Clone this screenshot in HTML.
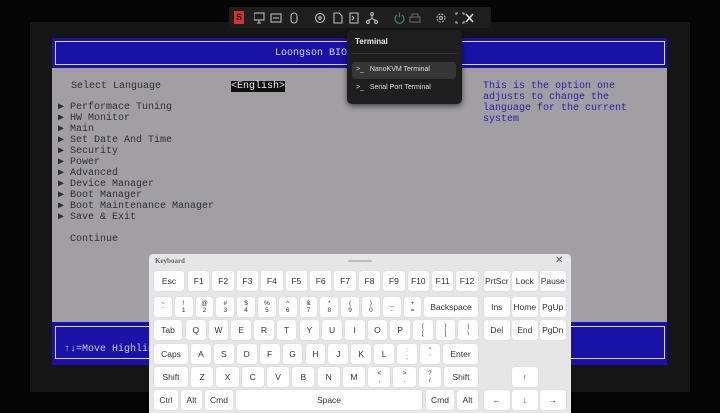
<!DOCTYPE html>
<html><head><meta charset="utf-8"><style>
*{margin:0;padding:0;box-sizing:border-box}
body{width:720px;height:413px;background:#050505;position:relative;overflow:hidden;font-family:"Liberation Sans",sans-serif}
.abs{position:absolute}
.screen{left:30px;top:22px;width:660px;height:370px;background:#151515}
.grey{left:52px;top:38px;width:615px;height:327px;background:#a19fa4}
.blue{background:#1a12a6}
.mono{font-family:"Liberation Mono",monospace;font-size:10px;line-height:11px;white-space:pre;color:#2e2e3a}
.help{color:#2a22a8}
.tb{left:229px;top:7px;width:262px;height:21px;background:#1e1e1e;border-radius:3px}
.ic{position:absolute;top:5px}
.dd{left:347px;top:30px;width:115px;height:74px;background:#1e1e1e;border-radius:5px;box-shadow:0 2px 6px rgba(0,0,0,.6)}
.kb{left:149px;top:254px;width:422px;height:159px;background:#e6e6e6;border-radius:4px 4px 0 0}
.k{position:absolute;background:#fff;border-radius:3px;height:20px;font-size:8.5px;color:#333;display:flex;align-items:center;justify-content:center;text-align:center;line-height:8px;box-shadow:0 0 1px rgba(0,0,0,.15)}
.k.s{font-size:6.5px;line-height:7px;flex-direction:column}
</style></head><body>
<div class="abs screen"></div>
<div class="abs grey"></div>
<div class="abs blue" style="left:52px;top:38px;width:615px;height:30px"></div>
<div class="abs" style="left:55px;top:41px;width:610px;height:24px;border:1px solid #d8d8f0"></div>
<div class="abs mono" style="left:275px;top:48px;color:#d8d8f8">Loongson BIOS Setup Utility</div>
<div class="abs blue" style="left:52px;top:322px;width:615px;height:43px"></div>
<div class="abs" style="left:55px;top:326px;width:610px;height:33px;border:1px solid #d8d8f0"></div>
<div class="abs mono" style="left:64px;top:344px;color:#c8c8f0">↑↓=Move Highlight</div>
<div class="abs mono" style="left:71px;top:81px">Select Language</div>
<div class="abs mono" style="left:231px;top:81px;background:#111;color:#eee">&lt;English&gt;</div>
<div class="abs mono" style="left:58px;top:102px">▶ Performace Tuning
▶ HW Monitor
▶ Main
▶ Set Date And Time
▶ Security
▶ Power
▶ Advanced
▶ Device Manager
▶ Boot Manager
▶ Boot Maintenance Manager
▶ Save &amp; Exit

  Continue</div>
<div class="abs mono help" style="left:483px;top:81px">This is the option one
adjusts to change the
language for the current
system</div>

<div class="abs tb">
<div class="ic" style="left:5px;top:4px;width:10px;height:13px;background:#d83030;color:#111;font-size:9px;line-height:13px;text-align:center;font-weight:bold">S</div>
<svg class="ic" style="left:25px" width="220" height="12" viewBox="0 0 220 12" fill="none" stroke="#bbb" stroke-width="1.1">
<rect x="0" y="1" width="10" height="7"/><path d="M5 8v3M3 11h4"/>
<rect x="17" y="2" width="10" height="8"/><path d="M19 6h6"/>
<rect x="37" y="1" width="6" height="10" rx="3"/>
<circle cx="66" cy="6" r="4.5"/><circle cx="66" cy="6" r="1.3"/>
<path d="M80 1h5l3 3v7h-8z"/>
<rect x="96" y="1" width="8" height="10"/><path d="M98 4l2 2-2 2"/>
<circle cx="118" cy="2" r="1.4"/><circle cx="114" cy="10" r="1.4"/><circle cx="122" cy="10" r="1.4"/><path d="M118 3.5v3M118 6.5l-4 2M118 6.5l4 2"/>
<path d="M143 3a4.5 4.5 0 1 0 5 0M145.5 0.5v5" stroke="#2a9a5a"/>
<rect x="156" y="5" width="10" height="5" stroke="#666"/><path d="M158 5V2h6v3" stroke="#666"/>
<circle cx="187" cy="6" r="4" stroke-dasharray="2 1.2"/><circle cx="187" cy="6" r="1.5"/>
<path d="M202 3V1h2M208 1h2v2M210 9v2h-2M204 11h-2V9"/>
<path d="M219 2l-7 8M212 2l7 8" stroke="#eee" stroke-width="1.4"/>
</svg>
</div>

<div class="abs dd">
<div class="abs" style="left:8px;top:7px;color:#eee;font-size:8px;font-weight:bold">Terminal</div>
<div class="abs" style="left:5px;top:23px;width:105px;height:1px;background:#333"></div>
<div class="abs" style="left:5px;top:32px;width:104px;height:17px;background:#363636;border-radius:3px"></div>
<div class="abs" style="left:9px;top:36px;color:#ddd;font-size:7px">&gt;_&nbsp;&nbsp; NanoKVM Terminal</div>
<div class="abs" style="left:9px;top:54px;color:#ddd;font-size:7px">&gt;_&nbsp;&nbsp; Serial Port Terminal</div>
</div>

<div class="abs kb" id="kb">
<div class="abs" style="left:6px;top:3px;font-family:'Liberation Serif',serif;font-size:7px;color:#666;font-weight:bold">Keyboard</div>
<div class="abs" style="left:199px;top:6px;width:24px;height:2px;background:#bbb;border-radius:1px"></div>
<div class="abs" style="left:406px;top:1px;font-size:10px;color:#555">✕</div>
</div>
<script>
var kb=document.getElementById('kb');
function k(x,y,w,t,s){var d=document.createElement('div');d.className='k'+(s?' s':'');d.style.left=(x-149)+'px';d.style.top=(y-254)+'px';d.style.width=w+'px';d.innerHTML=t;kb.appendChild(d);}
var Y=[271,297,320,344,367,390];
k(154,Y[0],30,'Esc');
for(var i=0;i<12;i++)k(188+i*24.4,Y[0],21.4,'F'+(i+1));
var r2=[['~','`'],['!','1'],['@','2'],['#','3'],['$','4'],['%','5'],['^','6'],['&amp;','7'],['*','8'],['(','9'],[')','0'],['_','-'],['+','=']];
r2.forEach(function(a,i){k(154+i*20.8,Y[1],17.8,a[0]+'<br>'+a[1],1)});
k(424,Y[1],54,'Backspace');
k(154,Y[2],28,'Tab');
'QWERTYUIOP'.split('').forEach(function(c,i){k(186+i*22.7,Y[2],19.7,c)});
[['{','['],['}',']'],['|','\\']].forEach(function(a,i){k(186+(10+i)*22.7,Y[2],19.7,a[0]+'<br>'+a[1],1)});
k(154,Y[3],34,'Caps');
'ASDFGHJKL'.split('').forEach(function(c,i){k(191+i*22.9,Y[3],19.9,c)});
[[':',';'],['"',"'"]].forEach(function(a,i){k(191+(9+i)*22.9,Y[3],19.9,a[0]+'<br>'+a[1],1)});
k(443,Y[3],35,'Enter');
k(154,Y[4],34,'Shift');
'ZXCVBNM'.split('').forEach(function(c,i){k(191+i*25.3,Y[4],22.3,c)});
[['&lt;',','],['&gt;','.'],['?','/']].forEach(function(a,i){k(191+(7+i)*25.3,Y[4],22.3,a[0]+'<br>'+a[1],1)});
k(444,Y[4],34,'Shift');
k(154,Y[5],24,'Ctrl');k(181,Y[5],21,'Alt');k(205,Y[5],28,'Cmd');k(236,Y[5],186,'Space');k(426,Y[5],28,'Cmd');k(457,Y[5],21,'Alt');
var N=[484,512,540];
['PrtScr','Lock','Pause'].forEach(function(t,i){k(N[i],Y[0],25.5,t)});
['Ins','Home','PgUp'].forEach(function(t,i){k(N[i],Y[1],25.5,t)});
['Del','End','PgDn'].forEach(function(t,i){k(N[i],Y[2],25.5,t)});
k(512,Y[4],25.5,'↑');
['←','↓','→'].forEach(function(t,i){k(N[i],Y[5],25.5,t)});
</script>
</body></html>
